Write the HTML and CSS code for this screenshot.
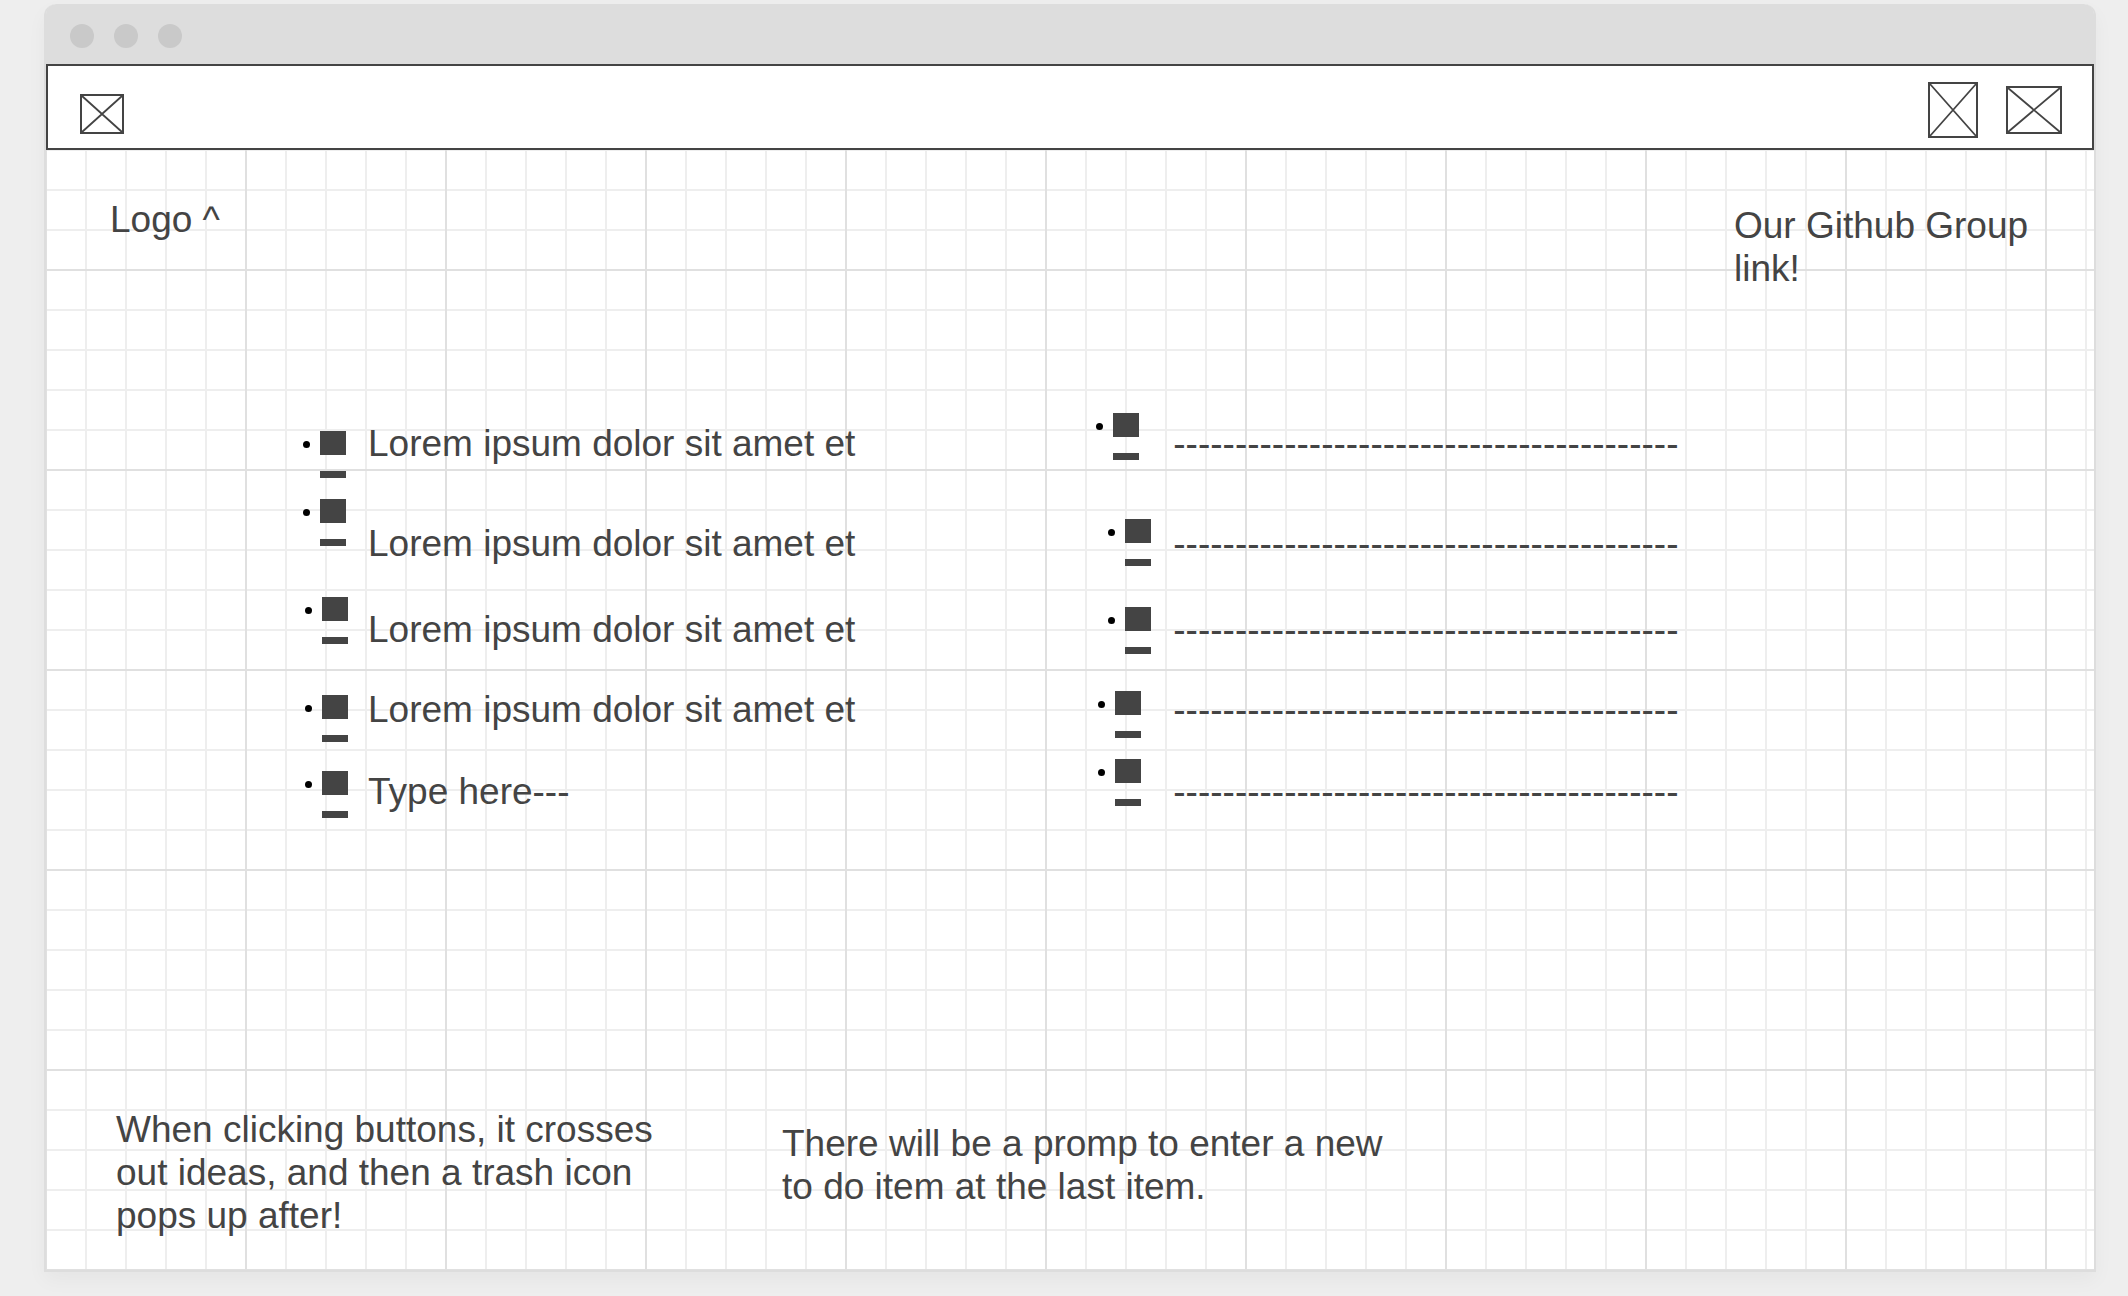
FILE: index.html
```html
<!DOCTYPE html>
<html lang="en">
<head>
<meta charset="utf-8">
<title>To do list wireframe</title>
<link rel="stylesheet" href="styles.css">
</head>
<body>
<div class="window">
  <div class="titlebar"><span class="dot"></span><span class="dot"></span><span class="dot"></span></div>
  <header class="header">
    <a class="logo" href="#" aria-label="Logo"><svg width="44" height="40" viewBox="0 0 44 40"><path class="cross" d="M2 2 42 38M42 2 2 38"/><rect class="frame" x="1" y="1" width="42" height="38"/></svg></a>
    <nav class="links">
      <a href="#" aria-label="Group"><svg width="50" height="56" viewBox="0 0 50 56"><path class="cross" d="M2 2 48 54M48 2 2 54"/><rect class="frame" x="1" y="1" width="48" height="54"/></svg></a>
      <a href="#" aria-label="Github"><svg width="56" height="48" viewBox="0 0 56 48"><path class="cross" d="M2 2 54 46M54 2 2 46"/><rect class="frame" x="1" y="1" width="54" height="46"/></svg></a>
    </nav>
  </header>
  <main class="canvas">
    <section class="captions">
      <p>Logo ^</p>
      <p class="github">Our Github Group link!</p>
    </section>
    <section class="board">
      <ul class="markers markers-left">
        <li></li><li></li><li class="shift"></li><li class="shift"></li><li class="shift"></li>
      </ul>
      <ul class="items">
        <li>Lorem ipsum dolor sit amet et</li>
        <li>Lorem ipsum dolor sit amet et</li>
        <li>Lorem ipsum dolor sit amet et</li>
        <li>Lorem ipsum dolor sit amet et</li>
        <li>Type here---</li>
      </ul>
      <ul class="markers markers-right">
        <li></li><li class="shift-far"></li><li class="shift-far"></li><li class="shift"></li><li class="shift"></li>
      </ul>
      <ul class="items">
        <li>-----------------------------------------</li>
        <li>-----------------------------------------</li>
        <li>-----------------------------------------</li>
        <li>-----------------------------------------</li>
        <li>-----------------------------------------</li>
      </ul>
    </section>
    <section class="notes">
      <p>When clicking buttons, it crosses out ideas, and then a trash icon pops up after!</p>
      <p class="prompt">There will be a promp to enter a new to do item at the last item.</p>
    </section>
  </main>
</div>
</body>
</html>
```
FILE: styles.css
```css
* {
  box-sizing: border-box;
}

body {
  display: flex;
  min-height: 100vh;
  margin: 0;
  padding: 4px 32px 24px 44px;
  background: #eee;
  color: #444;
  font: 37px/43px "Liberation Sans", Arial, sans-serif;
}

p,
ul {
  margin: 0;
  padding: 0;
  list-style: none;
}

.window {
  display: flex;
  flex: 1;
  flex-direction: column;
  border: 2px solid #ddd;
  border-top: 0;
  border-radius: 12px 12px 0 0;
  background: #fff;
  box-shadow: 0 8px 20px rgba(0, 0, 0, 0.04);
}

.titlebar {
  display: flex;
  align-items: center;
  gap: 20px;
  height: 60px;
  padding: 4px 24px 0;
  border-radius: 10px 10px 0 0;
  background: #ddd;
}

.titlebar .dot {
  width: 24px;
  height: 24px;
  border-radius: 50%;
  background: #c9c9c9;
}

.header {
  display: flex;
  align-items: center;
  justify-content: space-between;
  height: 86px;
  padding: 6px 30px 0 32px;
  border: 2px solid #444;
}

.header svg {
  display: block;
  fill: none;
  stroke: #444;
  stroke-width: 2;
}

.header .cross {
  stroke-width: 1.8;
}

.logo {
  padding-top: 8px;
}

.links {
  display: flex;
  align-items: center;
  gap: 28px;
}

/* Graph paper: a heavy line every 200px, a light one every 40px */
.canvas {
  display: flex;
  flex: 1;
  flex-direction: column;
  padding: 48px 60px 33px 64px;
  background-image:
    linear-gradient(#e0e0e0 2px, transparent 2px),
    linear-gradient(90deg, #e0e0e0 2px, transparent 2px),
    linear-gradient(#eee 2px, transparent 2px),
    linear-gradient(90deg, #eee 2px, transparent 2px);
  background-size: 200px 200px, 200px 200px, 40px 40px, 40px 40px;
  background-position: 0 119px, 199px 0, 0 39px, 39px 0;
}

.captions {
  display: flex;
  justify-content: space-between;
}

.github {
  width: 300px;
  padding-top: 6px;
}

.board {
  display: grid;
  grid-template-columns: 65px 11fr 77px 13fr;
  padding: 123px 0 0 193px;
}

.items {
  padding-top: 9px;
}

.items li:nth-child(2) { margin-top: 57px; }
.items li:nth-child(3) { margin-top: 43px; }
.items li:nth-child(4) { margin-top: 37px; }
.items li:nth-child(5) { margin-top: 39px; }

/* Bullet, solid square and the bar under it */
.markers li {
  display: grid;
  grid-template-columns: 7px 26px;
  grid-template-rows: 24px 7px;
  gap: 16px 10px;
}

.markers li::before {
  width: 7px;
  height: 7px;
  margin-top: 10px;
  border-radius: 50%;
  background: #000;
  content: "";
}

.markers li::after {
  grid-column: 2;
  grid-row: 1 / 3;
  background: linear-gradient(#444 24px, transparent 24px 40px, #444 40px);
  content: "";
}

.markers .shift { padding-left: 2px; }
.markers .shift-far { padding-left: 12px; }

.markers-left { padding-top: 18px; }
.markers-left li:nth-child(2) { margin-top: 21px; }
.markers-left li:nth-child(3) { margin-top: 51px; }
.markers-left li:nth-child(4) { margin-top: 51px; }
.markers-left li:nth-child(5) { margin-top: 29px; }

.markers-right li:nth-child(2) { margin-top: 59px; }
.markers-right li:nth-child(3) { margin-top: 41px; }
.markers-right li:nth-child(4) { margin-top: 37px; }
.markers-right li:nth-child(5) { margin-top: 21px; }

.notes {
  display: grid;
  grid-template-columns: 560px 610px;
  gap: 106px;
  margin-top: auto;
  padding-left: 6px;
}

.prompt {
  padding-top: 14px;
}
```
